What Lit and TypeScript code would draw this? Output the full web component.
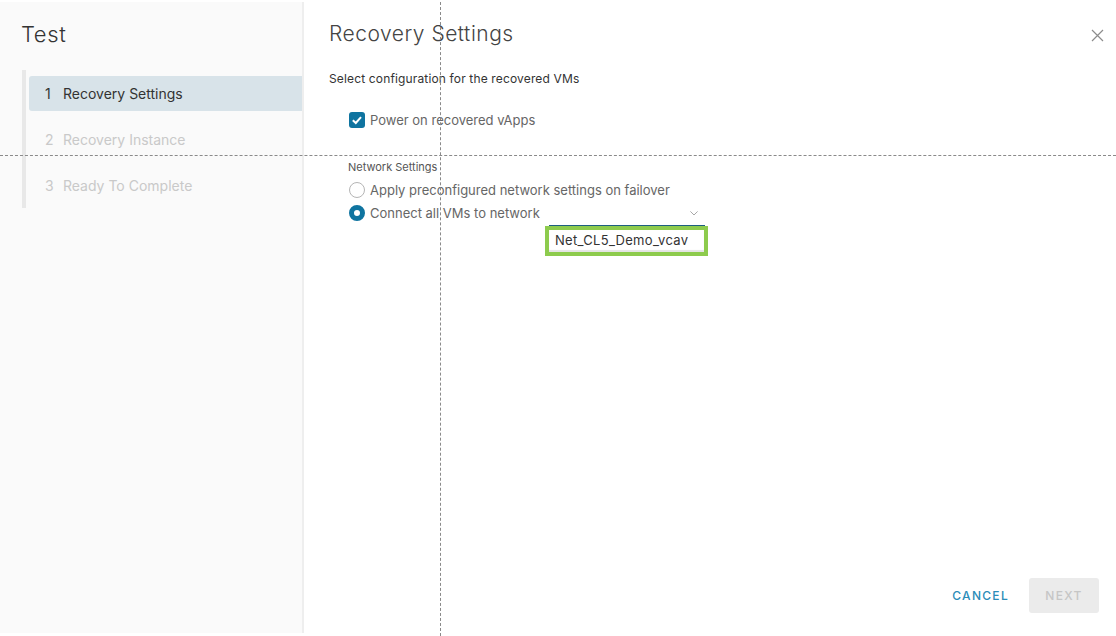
import { css, html, LitElement } from "lit";
import { customElement } from "lit/decorators.js";

@customElement("app-root")
export class AppRoot extends LitElement {
  render() {
    return html`
      <div class="dialog">
        <aside class="side">
          <h2>Test</h2>
          <ol class="steps">
            <li class="active"><span class="num">1</span>Recovery Settings</li>
            <li><span class="num">2</span>Recovery Instance</li>
            <li><span class="num">3</span>Ready To Complete</li>
          </ol>
        </aside>
        <main class="content">
          <div class="head">
            <h1>Recovery Settings</h1>
            <svg class="close" viewBox="0 0 13 13" width="13" height="13">
              <path d="M1 1L12 12M12 1L1 12" stroke="#8c8c8c" stroke-width="1.2" fill="none" />
            </svg>
          </div>
          <p class="lead">Select configuration for the recovered VMs</p>
          <div class="option power">
            <span class="check">
              <svg viewBox="0 0 16 16" width="16" height="16">
                <path d="M3.8 8.2L6.8 11L12 5.2" stroke="#fff" stroke-width="2" fill="none" />
              </svg>
            </span>
            Power on recovered vApps
          </div>
          <div class="legend">Network Settings</div>
          <div class="option"><span class="radio"></span>Apply preconfigured network settings on failover</div>
          <div class="option network">
            <span class="radio on"></span>Connect all VMs to network
            <div class="select">
              <svg class="chevron" viewBox="0 0 8 5" width="8" height="5">
                <path d="M0.4 0.4L4 4L7.6 0.4" stroke="#a8a8a8" stroke-width="1" fill="none" />
              </svg>
              <div class="value">Net_CL5_Demo_vcav</div>
            </div>
          </div>
          <div class="actions">
            <button class="cancel">CANCEL</button>
            <button class="next" disabled>NEXT</button>
          </div>
        </main>
        <div class="guide-v"></div>
        <div class="guide-h"></div>
      </div>
    `;
  }

  static styles = css`
    :host {
      display: block;
      font-family: "Inter", "Liberation Sans", sans-serif;
    }
    .dialog {
      position: relative;
      display: flex;
      height: 636px;
      width: 1116px;
      box-sizing: border-box;
      padding-top: 2px;
      padding-bottom: 3px;
      background: #fff;
      overflow: hidden;
    }
    .side {
      width: 302px;
      flex: none;
      background: #fafafa;
      border-right: 2px solid #eeeeee;
    }
    h2 {
      margin: 20px 0 0 21px;
      font-size: 22px;
      line-height: 24px;
      font-weight: 300;
      letter-spacing: 0.6px;
      color: #333;
    }
    .steps {
      list-style: none;
      margin: 24px 0 0 22px;
      padding: 6px 0;
      border-left: 4px solid #e8e8e8;
      height: 126px;
    }
    .steps li {
      display: flex;
      align-items: center;
      box-sizing: border-box;
      height: 35px;
      margin-bottom: 11px;
      margin-left: 3px;
      padding: 0 0 1px 16px;
      font-size: 14px;
      color: #c9c9c9;
      border-radius: 3px 0 0 3px;
    }
    .steps li.active {
      background: #d8e3e9;
      color: #333;
    }
    .num {
      width: 18px;
    }
    .content {
      flex: 1;
      display: flex;
      flex-direction: column;
      padding: 0 12px 0 25px;
      min-width: 0;
    }
    .head {
      display: flex;
      justify-content: space-between;
      align-items: center;
      margin-top: 18px;
      height: 26px;
    }
    h1 {
      margin: 0;
      font-size: 21px;
      font-weight: 300;
      letter-spacing: 0.5px;
      color: #444;
    }
    .close {
      margin-top: 4px;
    }
    .lead {
      margin: 25px 0 0;
      font-size: 12px;
      line-height: 16px;
      letter-spacing: 0.15px;
      color: #333;
    }
    .option {
      display: flex;
      align-items: center;
      gap: 5px;
      margin-left: 20px;
      height: 22px;
      font-size: 13px;
      color: #666;
    }
    .power {
      margin-top: 22px;
    }
    .check {
      width: 16px;
      height: 16px;
      border-radius: 3px;
      background: #0f74a0;
    }
    .check svg {
      display: block;
    }
    .legend {
      margin: 29px 0 5px 19px;
      font-size: 11px;
      line-height: 14px;
      color: #555;
    }
    .radio {
      width: 16px;
      height: 16px;
      box-sizing: border-box;
      border-radius: 50%;
      border: 1.5px solid #b5b5b5;
      background: #fff;
    }
    .radio.on {
      border: 5.5px solid #0f74a0;
    }
    .network {
      position: relative;
      margin-top: 1px;
    }
    .select {
      position: absolute;
      left: 200px;
      top: 0;
      width: 156px;
      height: 42px;
    }
    .chevron {
      position: absolute;
      right: 7px;
      top: 9px;
    }
    .value {
      position: absolute;
      left: -4px;
      top: 24px;
      box-sizing: border-box;
      width: 163px;
      height: 30px;
      border: 4px solid #8dcb4d;
      background: #fff;
      box-shadow: inset 0 -2px 1px #e4e4e4;
      padding-left: 6px;
      font-size: 13px;
      line-height: 21px;
      letter-spacing: 0.3px;
      color: #333;
    }
    .select::before {
      content: "";
      position: absolute;
      left: 0;
      right: 0;
      top: 23px;
      height: 1px;
      background: #1d5f80;
    }
    .actions {
      margin-top: auto;
      display: flex;
      justify-content: flex-end;
      align-items: center;
      gap: 20px;
      padding: 0 5px 20px 0;
    }
    button {
      font: inherit;
      font-size: 12px;
      font-weight: 500;
      letter-spacing: 1.3px;
      border: none;
      background: none;
      padding: 0;
    }
    .cancel {
      color: #2a8cb8;
    }
    .next {
      width: 70px;
      height: 35px;
      border-radius: 3px;
      background: #ebebeb;
      color: #c6c6c6;
    }
    .guide-v {
      position: absolute;
      left: 440px;
      top: 2px;
      bottom: 0;
      border-left: 1px dashed #8a8a8a;
    }
    .guide-h {
      position: absolute;
      left: 0;
      right: 0;
      top: 155px;
      border-top: 1px dashed #8a8a8a;
    }
  `;
}
